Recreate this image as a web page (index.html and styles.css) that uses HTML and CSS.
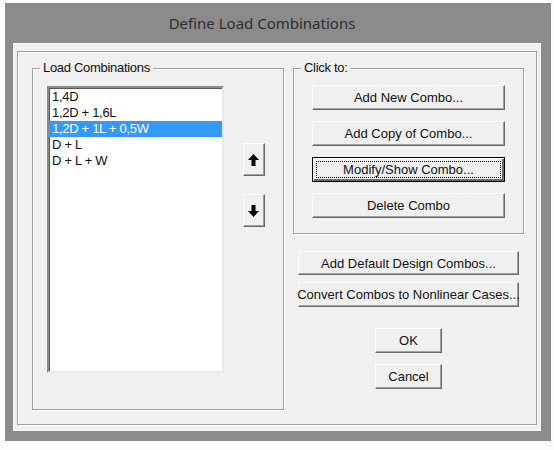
FILE: index.html
```html
<!DOCTYPE html>
<html lang="en">
<head>
  <meta charset="UTF-8">
  <title>Define Load Combinations</title>
  <link rel="stylesheet" href="styles.css">
</head>
<body>
  <div class="window">
    <!-- Title bar -->
    <div class="title-bar">Define Load Combinations</div>

    <div class="client">
      <div class="panel">
        <!-- Left group: list of combinations -->
        <div class="group group-list">
          <span class="group-title">Load Combinations</span>
          <ul class="listbox">
            <li>1,4D</li>
            <li>1,2D + 1,6L</li>
            <li class="selected">1,2D + 1L + 0,5W</li>
            <li>D + L</li>
            <li>D + L + W</li>
          </ul>
          <div class="move-buttons">
            <button class="btn btn-arrow" id="move-up">
              <svg width="11" height="12" viewBox="0 0 11 12"><path d="M5.5 0 L11 6 L7.5 6 L7.5 12 L3.5 12 L3.5 6 L0 6 Z" fill="#000"/></svg>
            </button>
            <button class="btn btn-arrow" id="move-down">
              <svg width="11" height="12" viewBox="0 0 11 12"><path d="M5.5 12 L11 6 L7.5 6 L7.5 0 L3.5 0 L3.5 6 L0 6 Z" fill="#000"/></svg>
            </button>
          </div>
        </div>

        <!-- Right column -->
        <div class="right-col">
          <div class="group group-actions">
            <span class="group-title">Click to:</span>
            <button class="btn btn-action">Add New Combo...</button>
            <button class="btn btn-action">Add Copy of Combo...</button>
            <button class="btn btn-action focused">Modify/Show Combo...</button>
            <button class="btn btn-action">Delete Combo</button>
          </div>
          <button class="btn btn-extra btn-default">Add Default Design Combos...</button>
          <button class="btn btn-extra btn-convert">Convert Combos to Nonlinear Cases...</button>
          <button class="btn btn-small btn-ok">OK</button>
          <button class="btn btn-small btn-cancel">Cancel</button>
        </div>
      </div>
    </div>
  </div>
</body>
</html>
```

FILE: styles.css
```css
* {
  margin: 0;
  padding: 0;
  box-sizing: border-box;
}
body {
  background: #fcfcfc;
  font-family: "Liberation Sans", Arial, sans-serif;
  font-size: 13px;
  letter-spacing: -0.3px;
  color: #111;
}
/* Window frame */
.window {
  width: 546px;
  height: 438px;
  margin: 3px 0 0 5px;
  padding: 0 10px 10px 8px;
  background: #8b8b8b;
  display: flex;
  flex-direction: column;
}
.title-bar {
  height: 40px;
  display: flex;
  align-items: center;
  justify-content: center;
  padding-right: 30px;
  font-family: "Noto Sans", "Open Sans", sans-serif;
  font-size: 15px;
  letter-spacing: 0;
  color: #2e2e2e;
}
.client {
  flex: 1;
  background: #f0f0f0;
  border: 1px solid #fafafa;
  padding: 7px 3px 5px 3px;
  display: flex;
}
/* Etched inner frame */
.panel {
  flex: 1;
  display: flex;
  gap: 9px;
  padding: 16px 12px 14px 14px;
  border: 1px solid #a0a0a0;
  box-shadow: inset 1px 1px 0 #fff, 1px 1px 0 #fff;
}
/* Group boxes */
.group {
  position: relative;
  border: 1px solid #a0a0a0;
  box-shadow: inset 1px 1px 0 #fff, 1px 1px 0 #fff;
}
.group-title {
  position: absolute;
  top: -9px;
  left: 7px;
  padding: 0 3px;
  line-height: 16px;
  background: #f0f0f0;
}
.group-list {
  width: 252px;
  display: flex;
  padding: 17px 0 0 14px;
}
/* List box */
.listbox {
  list-style: none;
  width: 177px;
  height: 287px;
  padding-top: 1px;
  background: #fff;
  border: 2px solid;
  border-color: #8a8a8a #e8e8e8 #e8e8e8 #8a8a8a;
  box-shadow: inset 1px 1px 0 #5a5a5a;
}
.listbox li {
  height: 16px;
  line-height: 16px;
  padding-left: 3px;
  white-space: nowrap;
}
.listbox li.selected {
  background: #3399ff;
  color: #fff;
}
.move-buttons {
  flex: 1;
  display: flex;
  flex-direction: column;
  align-items: center;
  gap: 18px;
  padding-top: 57px;
}
/* Classic 3D buttons */
.btn {
  font: inherit;
  color: #111;
  background: #f0f0f0;
  border: 1px solid;
  border-color: #fff #6a6a6a #6a6a6a #fff;
  box-shadow: inset -1px -1px 0 #a0a0a0;
  display: flex;
  align-items: center;
  justify-content: center;
  cursor: pointer;
  white-space: nowrap;
}
.btn-arrow {
  width: 22px;
  height: 33px;
}
.right-col {
  width: 231px;
  display: flex;
  flex-direction: column;
  align-items: center;
}
.group-actions {
  width: 100%;
  height: 166px;
  display: flex;
  flex-direction: column;
  align-items: center;
  gap: 11px;
  padding-top: 16px;
}
.btn-action {
  width: 193px;
  height: 25px;
}
.btn.focused {
  border-color: #000;
  box-shadow: inset 1px 1px 0 #fff, inset -2px -2px 0 #6a6a6a;
  outline: 1px dotted #000;
  outline-offset: -5px;
}
.btn-extra {
  width: 221px;
  height: 25px;
}
.btn-default {
  margin-top: 17px;
  height: 24px;
}
.btn-convert {
  margin-top: 7px;
}
.btn-small {
  width: 67px;
  height: 25px;
}
.btn-ok {
  margin-top: 21px;
}
.btn-cancel {
  margin-top: 11px;
}
```
